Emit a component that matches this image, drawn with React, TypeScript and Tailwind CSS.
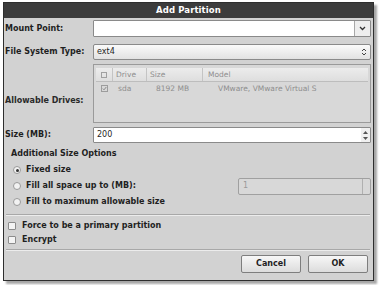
import React from 'react';

const font = { fontFamily: '"DejaVu Sans", Verdana, sans-serif' };

function Radio({ on }: { on?: boolean }) {
  return (
    <span className="w-[8px] h-[8px] rounded-full border border-[#9a9a9a] bg-[#f2f2f2] flex items-center justify-center shrink-0">
      {on && <span className="w-[3px] h-[3px] rounded-full bg-[#333]" />}
    </span>
  );
}

function Check() {
  return <span className="w-[8px] h-[8px] border border-[#8c8c8c] bg-[#f4f4f4] shrink-0 rounded-[1px]" />;
}

function Separator() {
  return (
    <div className="flex flex-col">
      <div className="h-px bg-[#a8a8a8]" />
      <div className="h-px bg-[#ececec]" />
    </div>
  );
}

export default function App() {
  return (
    <div className="w-[381px] h-[285px] bg-white pl-[3px] pt-[2px]" style={font}>
      <div className="w-[371px] h-[279px] border border-[#2e2e2e] bg-[#d2d2d2] flex flex-col shadow-[3px_3px_2px_rgba(0,0,0,0.35)] text-[8px] text-[#1f1f1f]">
        {/* Title bar */}
        <div className="h-[15px] bg-[#3c3c3c] flex items-center justify-center text-white font-bold text-[8.5px] tracking-[0.1px]">
          Add Partition
        </div>

        <div className="flex flex-col pl-[1px] pr-[2px] pt-[2px]">
          {/* Mount point */}
          <div className="flex items-center h-[17px]">
            <div className="w-[88px] font-bold">Mount Point:</div>
            <div className="flex-1 h-full border border-[#8a8a8a] bg-white flex rounded-[1px]">
              <div className="flex-1" />
              <div className="w-[16px] border-l border-[#a8a8a8] bg-[#eeeeee] flex items-center justify-center">
                <svg width="7" height="5" viewBox="0 0 7 5"><path d="M1 1 L3.5 3.5 L6 1" stroke="#333" strokeWidth="1.3" fill="none" /></svg>
              </div>
            </div>
          </div>

          {/* File system type */}
          <div className="flex items-center h-[16px] mt-[7px]">
            <div className="w-[88px] font-bold">File System Type:</div>
            <div className="flex-1 h-full border border-[#8a8a8a] bg-gradient-to-b from-[#fafafa] to-[#e2e2e2] flex items-center rounded-[2px] pl-[3px] pr-[3px]">
              <span className="flex-1">ext4</span>
              <svg width="6" height="8" viewBox="0 0 6 8"><path d="M1 3 L3 1 L5 3 M1 5 L3 7 L5 5" stroke="#444" strokeWidth="1" fill="none" /></svg>
            </div>
          </div>

          {/* Allowable drives */}
          <div className="flex h-[59px] mt-[4px]">
            <div className="w-[88px] font-bold pt-[31px] text-[#2a2a2a]">Allowable Drives:</div>
            <div className="flex-1 h-full border border-[#9a9a9a] bg-[#d8d8d8] flex flex-col text-[#8e8e8e] text-[7.5px]">
              <div className="h-[14px] mt-[3px] mx-[2px] flex items-center bg-gradient-to-b from-[#ececec] to-[#dedede] border-b border-[#bdbdbd]">
                <div className="w-[17px] flex justify-center border-r border-[#c4c4c4] h-full items-center"><span className="w-[6px] h-[6px] border border-[#a0a0a0]" /></div>
                <div className="w-[34px] pl-[3px] border-r border-[#c4c4c4] h-full flex items-center">Drive</div>
                <div className="w-[56px] pl-[3px] border-r border-[#c4c4c4] h-full flex items-center">Size</div>
                <div className="pl-[5px]">Model</div>
              </div>
              <div className="h-[13px] mx-[2px] flex items-center">
                <div className="w-[17px] flex justify-center">
                  <span className="w-[7px] h-[7px] border border-[#9c9c9c] flex items-center justify-center">
                    <svg width="5" height="5" viewBox="0 0 5 5"><path d="M0.8 2.6 L2 3.8 L4.3 1" stroke="#888" strokeWidth="1" fill="none" /></svg>
                  </span>
                </div>
                <div className="w-[43px] pl-[5px]">sda</div>
                <div className="w-[53px]">8192 MB</div>
                <div className="pl-[9px]">VMware, VMware Virtual S</div>
              </div>
            </div>
          </div>

          {/* Size */}
          <div className="flex items-center h-[16px] mt-[4px]">
            <div className="w-[88px] font-bold">Size (MB):</div>
            <div className="flex-1 h-full border border-[#8a8a8a] bg-white flex items-center pl-[3px] rounded-[1px]">
              <span className="flex-1">200</span>
              <div className="w-[9px] h-full flex flex-col items-center justify-center gap-[3px] bg-[#f0f0f0]">
                <svg width="5" height="3" viewBox="0 0 5 3"><path d="M0 3 L2.5 0 L5 3Z" fill="#555" /></svg>
                <svg width="5" height="3" viewBox="0 0 5 3"><path d="M0 0 L2.5 3 L5 0Z" fill="#555" /></svg>
              </div>
            </div>
          </div>

          {/* Additional size options */}
          <div className="mt-[6px] pl-[6px] font-bold leading-[10px]">Additional Size Options</div>
          <div className="mt-[3px] pl-[8px] flex flex-col font-bold">
            <div className="flex items-center h-[16px] gap-[5px]"><Radio on /><span>Fixed size</span></div>
            <div className="flex items-center h-[16px] gap-[5px]">
              <Radio />
              <span className="flex-1">Fill all space up to (MB):</span>
              <div className="w-[133px] h-[17px] border border-[#a0a0a0] bg-[#d8d8d8] rounded-[2px] flex items-center pl-[4px] text-[#9a9a9a] font-normal">
                <span className="flex-1">1</span>
                <div className="w-[8px] h-full border-l border-[#b0b0b0]" />
              </div>
            </div>
            <div className="flex items-center h-[16px] gap-[5px]"><Radio /><span>Fill to maximum allowable size</span></div>
          </div>

          <div className="mt-[4px] mx-[1px]"><Separator /></div>

          {/* Checkboxes */}
          <div className="flex flex-col font-bold pl-[3px] mt-[3px]">
            <div className="flex items-center h-[14px] gap-[6px]"><Check /><span>Force to be a primary partition</span></div>
            <div className="flex items-center h-[14px] gap-[6px]"><Check /><span>Encrypt</span></div>
          </div>

          <div className="mt-[2px] mx-[1px]"><Separator /></div>

          {/* Buttons */}
          <div className="flex justify-end gap-[7px] mt-[4px] pr-[3px] font-bold">
            <button className="w-[60px] h-[18px] border border-[#7e7e7e] rounded-[2px] bg-gradient-to-b from-[#f7f7f7] to-[#dcdcdc] text-[8px]" style={font}>Cancel</button>
            <button className="w-[60px] h-[18px] border border-[#7e7e7e] rounded-[2px] bg-gradient-to-b from-[#f7f7f7] to-[#dcdcdc] text-[8px]" style={font}>OK</button>
          </div>
        </div>
      </div>
    </div>
  );
}
